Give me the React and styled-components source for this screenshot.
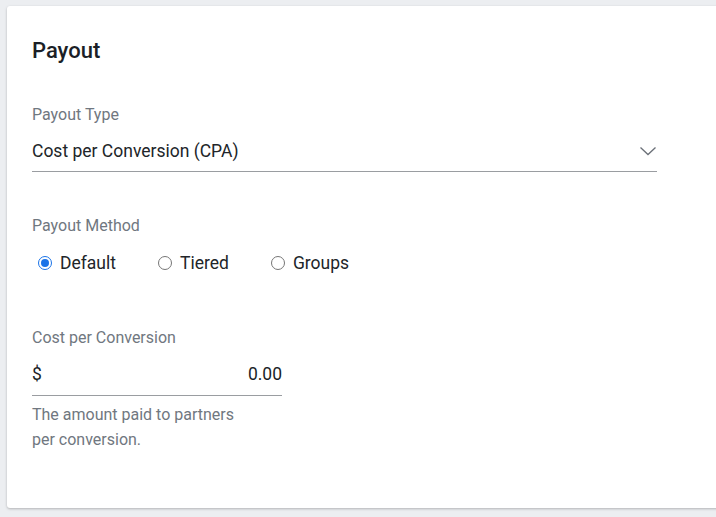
import React from 'react';
import styled, { createGlobalStyle } from 'styled-components';

const GlobalStyle = createGlobalStyle`
  html, body {
    margin: 0;
    padding: 0;
    background: #eceef1;
    overflow: hidden;
    font-family: Roboto, "Liberation Sans", sans-serif;
  }
`

const Page = styled.div`
  padding: 6px 0 0 7px;
  height: 517px;
  box-sizing: border-box;
`

const Card = styled.section`
  width: 740px;
  height: 502px;
  box-sizing: border-box;
  background: #fff;
  border-radius: 3px;
  box-shadow: 0 1px 3px rgba(0, 0, 0, 0.18), 0 1px 2px rgba(0, 0, 0, 0.08);
  padding: 31px 0 0 25px;
`

const Title = styled.h2`
  margin: 0;
  font-size: 22px;
  font-weight: 500;
  line-height: 28px;
  color: #1b1f27;
`

const Field = styled.div`
  width: ${p => p.width}px;
  margin-top: ${p => p.top}px;
`

const Label = styled.div`
  font-size: 16px;
  line-height: 20px;
  color: #707780;
`

const SelectBox = styled.div`
  display: flex;
  align-items: center;
  justify-content: space-between;
  height: 40px;
  margin-top: 7px;
  border-bottom: 1px solid #9a9da1;
  font-size: 17.5px;
  color: #212529;
  padding-bottom: 2px;
  box-sizing: border-box;
`

const Chevron = () => (
  <svg width="18" height="10" viewBox="0 0 18 10">
    <path d="M1.5 1.5l7.5 7 7.5-7" fill="none" stroke="#6b7078" strokeWidth="1.3" />
  </svg>
)

const RadioRow = styled.div`
  display: flex;
  align-items: center;
  margin-top: 17px;
  padding-left: 6px;
  gap: 42px;
`

const RadioOption = styled.label`
  display: flex;
  align-items: center;
  gap: 8px;
  font-size: 17.5px;
  color: #212529;
`

const RadioCircle = styled.span`
  width: 14px;
  height: 14px;
  box-sizing: border-box;
  border-radius: 50%;
  border: ${p => (p.checked ? '1px solid #1a73e8' : '1px solid #767676')};
  display: flex;
  align-items: center;
  justify-content: center;
  &::after {
    content: '';
    display: ${p => (p.checked ? 'block' : 'none')};
    width: 8px;
    height: 8px;
    border-radius: 50%;
    background: #1a73e8;
  }
`

const AmountBox = styled.div`
  display: flex;
  justify-content: space-between;
  align-items: center;
  height: 41px;
  margin-top: 7px;
  padding-bottom: 2px;
  border-bottom: 1px solid #9a9da1;
  font-size: 17.5px;
  color: #1b1f27;
  box-sizing: border-box;
`

const Help = styled.p`
  margin: 6px 0 0;
  font-size: 16px;
  line-height: 25px;
  color: #707780;
`

const options = ['Default', 'Tiered', 'Groups']

export default function App() {
  return (
    <Page>
      <GlobalStyle />
      <Card>
        <Title>Payout</Title>
        <Field width={625} top={40}>
          <Label>Payout Type</Label>
          <SelectBox>
            <span>Cost per Conversion (CPA)</span>
            <Chevron />
          </SelectBox>
        </Field>
        <Field width={625} top={44}>
          <Label>Payout Method</Label>
          <RadioRow>
            {options.map((o, i) => (
              <RadioOption key={o}>
                <RadioCircle checked={i === 0} />
                {o}
              </RadioOption>
            ))}
          </RadioRow>
        </Field>
        <Field width={250} top={55}>
          <Label>Cost per Conversion</Label>
          <AmountBox>
            <span>$</span>
            <span>0.00</span>
          </AmountBox>
          <Help>The amount paid to partners<br />per conversion.</Help>
        </Field>
      </Card>
    </Page>
  );
}
